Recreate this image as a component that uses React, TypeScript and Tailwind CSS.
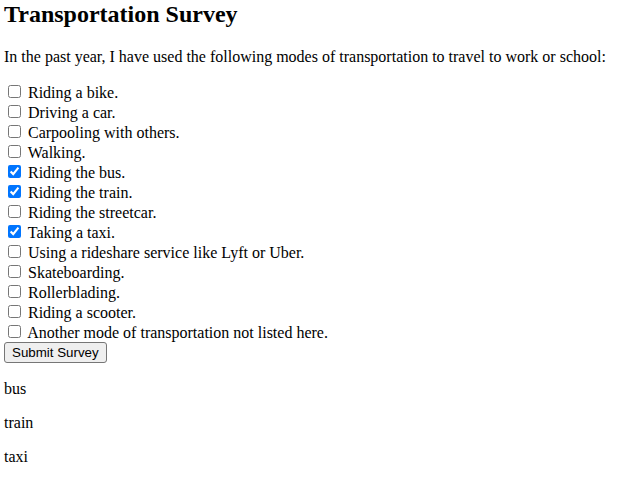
const modes = [
  { label: "Riding a bike.", checked: false },
  { label: "Driving a car.", checked: false },
  { label: "Carpooling with others.", checked: false },
  { label: "Walking.", checked: false },
  { label: "Riding the bus.", checked: true },
  { label: "Riding the train.", checked: true },
  { label: "Riding the streetcar.", checked: false },
  { label: "Taking a taxi.", checked: true },
  { label: "Using a rideshare service like Lyft or Uber.", checked: false },
  { label: "Skateboarding.", checked: false },
  { label: "Rollerblading.", checked: false },
  { label: "Riding a scooter.", checked: false },
  { label: "Another mode of transportation not listed here.", checked: false },
];

const results = ["bus", "train", "taxi"];

export default function App() {
  return (
    <div className="px-1 pt-px font-['Liberation_Serif',serif] text-base leading-[normal] text-black bg-white">
      <h2 className="text-2xl font-bold leading-[normal] mb-[19.92px]">Transportation Survey</h2>
      <p className="mb-4">
        In the past year, I have used the following modes of transportation to travel to work or school:
      </p>
      <form onSubmit={(e) => e.preventDefault()} className="pb-px">
        {modes.map((m) => (
          <div key={m.label}>
            <input
              type="checkbox"
              defaultChecked={m.checked}
              className="ml-1 mr-[3px] my-[3px]"
            />{" "}
            {m.label}
          </div>
        ))}
        <button
          type="submit"
          className="border border-[#767676] rounded-[3px] bg-[#efefef] px-[7px] py-[2px] text-[13.333px] leading-[normal] font-['Liberation_Sans',sans-serif]"
        >
          Submit Survey
        </button>
      </form>
      {results.map((r) => (
        <p key={r} className="my-4">
          {r}
        </p>
      ))}
    </div>
  );
}
